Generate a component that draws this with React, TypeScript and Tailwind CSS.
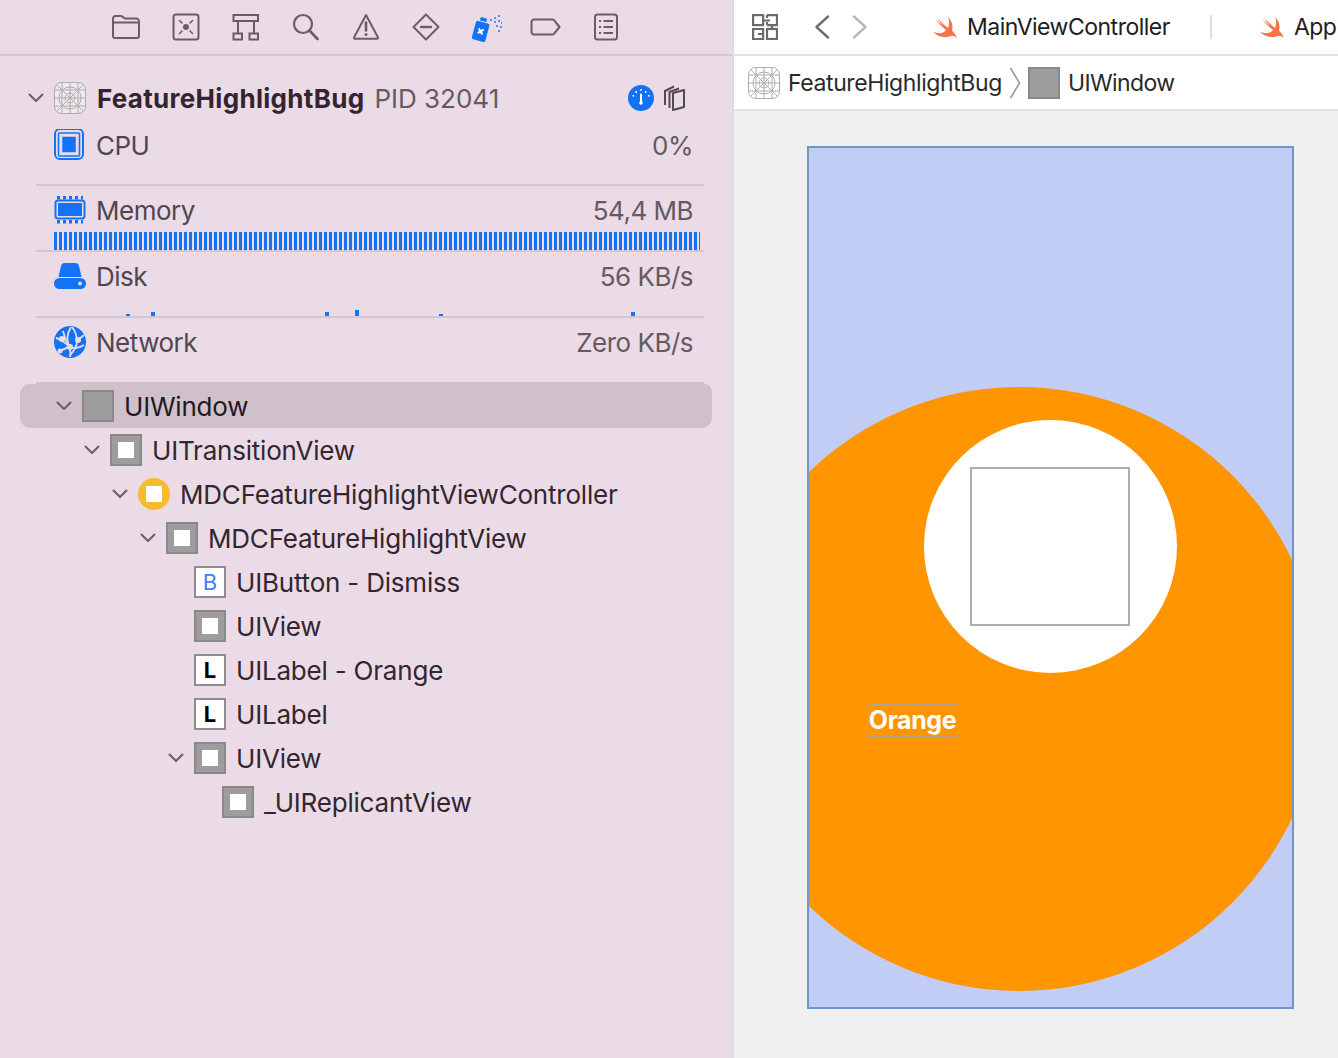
import type { ReactNode } from 'react';

const font = { fontFamily: 'Inter, "Noto Sans", sans-serif' };

const stroke = '#6b5d67';
const blue = '#1473f5';

function Ico({ children, w = 32, h = 32, className = '' }: { children: ReactNode; w?: number; h?: number; className?: string }) {
  return (
    <svg width={w} height={h} viewBox={`0 0 ${w} ${h}`} fill="none" className={`shrink-0 ${className}`}>
      {children}
    </svg>
  );
}

// navigator tabs
const navIcons: ReactNode[] = [
  <g stroke={stroke} strokeWidth="2" strokeLinejoin="round">
    <path d="M3 25V7.5A2.5 2.5 0 0 1 5.500 5H11c2 0 2.500 2.600 4.500 2.600H26.500A2.500 2.500 0 0 1 29 10.100V25a2 2 0 0 1-2 2H5a2 2 0 0 1-2-2z" />
    <path d="M3 11.500H29" />
  </g>,
  <g stroke={stroke} strokeWidth="2" strokeLinecap="round">
    <rect x="3.500" y="3.500" width="25" height="25" rx="2.500" />
    <circle cx="16" cy="16" r="3" fill={stroke} stroke="none" />
    <path d="M9.500 9.500l2.500 2.500M22.500 9.500L20 12M9.500 22.500l2.500-2.500M22.500 22.500L20 20" strokeWidth="1.600" />
  </g>,
  <g stroke={stroke} strokeWidth="2">
    <rect x="3.500" y="4" width="24.500" height="6" />
    <rect x="3.500" y="22.500" width="8.500" height="6" />
    <rect x="19.500" y="22.500" width="8.500" height="6" />
    <path d="M8 10v12.500M24 10v12.500" />
  </g>,
  <g stroke={stroke} strokeWidth="2.200" strokeLinecap="round">
    <circle cx="13" cy="13" r="9" />
    <path d="M19.500 19.500L27.500 28" strokeWidth="2.600" />
  </g>,
  <g stroke={stroke} strokeWidth="2" strokeLinejoin="round">
    <path d="M16 4L28 26.500a.8.800 0 0 1-.7 1.200H4.700a.8.800 0 0 1-.7-1.200z" />
    <path d="M16 11.500v8" strokeWidth="2.600" strokeLinecap="round" />
    <circle cx="16" cy="23.500" r="1.500" fill={stroke} stroke="none" />
  </g>,
  <g stroke={stroke} strokeWidth="2" strokeLinejoin="round">
    <path d="M16 3.500L28.500 16 16 28.500 3.500 16z" />
    <path d="M11 16h10" strokeWidth="2.400" strokeLinecap="round" />
  </g>,
  <g>
    <g transform="rotate(15 11 19)">
      <rect x="4" y="11" width="14" height="19" rx="2" fill={blue} />
      <rect x="7.500" y="6.500" width="6.500" height="3.500" fill={blue} />
      <path d="M8.500 18l5 5M13.500 18l-5 5" stroke="#fff" strokeWidth="2" />
    </g>
    <g fill="#4b93f7">
      <rect x="20" y="8" width="2" height="2" />
      <rect x="24" y="6" width="2" height="2" />
      <rect x="28" y="4" width="2" height="2" />
      <rect x="24" y="10" width="2" height="2" />
      <rect x="28" y="9" width="2" height="2" />
      <rect x="31" y="11" width="1.500" height="2" />
      <rect x="26" y="14" width="2" height="2" />
      <rect x="30" y="15" width="2" height="2" />
      <rect x="28" y="19" width="2" height="2" />
    </g>
  </g>,
  <path d="M4 8.500h18.500a2 2 0 0 1 1.500.7l5.500 6.800-5.500 6.800a2 2 0 0 1-1.500.7H4a2.500 2.500 0 0 1-2.500-2.500V11A2.500 2.500 0 0 1 4 8.500z" stroke={stroke} strokeWidth="2" strokeLinejoin="round" />,
  <g stroke={stroke} strokeWidth="2">
    <rect x="5" y="3.500" width="22" height="25" rx="2.500" />
    <path d="M13.500 10H23M13.500 16H23M13.500 22H23" />
    <path d="M9 10h2M9 16h2M9 22h2" />
  </g>,
];

function AppIcon() {
  return (
    <Ico>
      <g stroke="#adadad" strokeWidth="1" fill="none">
        <rect x="0.500" y="0.500" width="31" height="31" rx="7" fill="#fff" fillOpacity="0.35" />
        <path d="M8 .5v31M16 .5v31M24 .5v31M.5 8h31M.5 16h31M.5 24h31M3 3l26 26M29 3L3 29" />
        <circle cx="16" cy="16" r="5" />
        <circle cx="16" cy="16" r="11" />
      </g>
    </Ico>
  );
}

function Chevron() {
  return (
    <svg width="16" height="10" viewBox="0 0 16 10" fill="none" className="shrink-0">
      <path d="M1.500 1.500L8 8l6.500-6.500" stroke="#6a5e67" strokeWidth="2" strokeLinecap="round" strokeLinejoin="round" />
    </svg>
  );
}

function CpuIcon() {
  return (
    <Ico>
      <rect x="1" y="1" width="28" height="30" rx="5" stroke={blue} strokeWidth="2" transform="translate(0 -1)" />
      <rect x="4.500" y="4" width="21" height="23" rx="1" stroke={blue} strokeWidth="1.600" />
      <rect x="8.500" y="8" width="13" height="15" fill={blue} stroke={blue} strokeWidth="1" strokeDasharray="1 1" />
    </Ico>
  );
}

function MemoryIcon() {
  return (
    <Ico>
      <g fill={blue}>
        <rect x="3" y="2" width="3" height="3.500" /><rect x="9" y="2" width="3" height="3.500" />
        <rect x="15" y="2" width="3" height="3.500" /><rect x="21" y="2" width="3" height="3.500" />
        <rect x="27" y="2" width="2" height="3.500" />
        <rect x="3" y="26" width="3" height="3.500" /><rect x="9" y="26" width="3" height="3.500" />
        <rect x="15" y="26" width="3" height="3.500" /><rect x="21" y="26" width="3" height="3.500" />
        <rect x="27" y="26" width="2" height="3.500" />
      </g>
      <rect x="1.500" y="6.500" width="29" height="18" rx="2.500" stroke={blue} strokeWidth="2" />
      <rect x="4" y="9" width="24" height="13" fill={blue} />
    </Ico>
  );
}

function DiskIcon() {
  return (
    <Ico>
      <path d="M4.500 17L7 6A4 4 0 0 1 11 3H21a4 4 0 0 1 4 3L27.500 17z" fill={blue} />
      <rect x="0" y="18" width="32" height="11" rx="5.500" fill={blue} />
      <circle cx="26" cy="23.500" r="2" fill="#eadbe6" />
    </Ico>
  );
}

function NetworkIcon() {
  return (
    <Ico>
      <circle cx="16" cy="16" r="16" fill={blue} />
      <g stroke="#eadbe6" strokeWidth="1.800" fill="none">
        <path d="M2 12c5 1 8 4 13 8 3 3 9 3 15-1" />
        <path d="M17 1c-3 5-5 12-2 19 1 3 2 7 1 11" />
        <path d="M18 1c4 5 5 11 5 14 0 5-3 10-7 14" />
        <path d="M9 5c1 5 3 10 6 15M4 25c5-1 9-3 11-5M24 14l6-5" />
      </g>
      <g fill="#eadbe6">
        <circle cx="8" cy="13" r="3" />
        <circle cx="16" cy="21" r="3" />
        <circle cx="24" cy="14" r="3" />
        <circle cx="6" cy="25" r="2.500" />
      </g>
    </Ico>
  );
}

function ViewBox({ kind }: { kind: 'window' | 'view' | 'vc' | 'button' | 'label' }) {
  if (kind === 'window') {
    return <div className="w-8 h-8 shrink-0 bg-[#9d9d9d] border-2 border-[#888888]" />;
  }
  if (kind === 'vc') {
    return (
      <div className="w-8 h-8 shrink-0 rounded-full bg-[#f7bc2e] flex items-center justify-center">
        <div className="w-4 h-4 bg-white" />
      </div>
    );
  }
  if (kind === 'view') {
    return (
      <div className="w-8 h-8 shrink-0 bg-[#9d9d9d] border-2 border-[#888888] flex items-center justify-center">
        <div className="w-4 h-4 bg-white" />
      </div>
    );
  }
  return (
    <div className="w-8 h-8 shrink-0 bg-white border-2 border-[#8f8d8f] flex items-center justify-center">
      {kind === 'button' ? (
        <span className="text-[22px] leading-none text-[#3f82f0]">B</span>
      ) : (
        <span className="text-[22px] leading-none font-bold text-black">L</span>
      )}
    </div>
  );
}

const tree: { label: string; depth: number; kind: 'window' | 'view' | 'vc' | 'button' | 'label'; open?: boolean }[] = [
  { label: 'UIWindow', depth: 0, kind: 'window', open: true },
  { label: 'UITransitionView', depth: 1, kind: 'view', open: true },
  { label: 'MDCFeatureHighlightViewController', depth: 2, kind: 'vc', open: true },
  { label: 'MDCFeatureHighlightView', depth: 3, kind: 'view', open: true },
  { label: 'UIButton - Dismiss', depth: 4, kind: 'button' },
  { label: 'UIView', depth: 4, kind: 'view' },
  { label: 'UILabel - Orange', depth: 4, kind: 'label' },
  { label: 'UILabel', depth: 4, kind: 'label' },
  { label: 'UIView', depth: 4, kind: 'view', open: true },
  { label: '_UIReplicantView', depth: 5, kind: 'view' },
];

function Metric({ icon, label, value }: { icon: ReactNode; label: string; value: string }) {
  return (
    <div className="h-[44px] flex items-center pl-[54px] pr-[39px]">
      {icon}
      <span className="ml-[10px] pt-px text-[26px] tracking-[-0.5px] text-[#504650]">{label}</span>
      <span className="ml-auto pt-px text-[26px] tracking-[-0.5px] text-[#655a63]">{value}</span>
    </div>
  );
}

function Swift() {
  return (
    <svg width="24" height="21" viewBox="0 0 24 21" className="shrink-0">
      <path
        d="M15 0C20 5 20 10 19 13.500C21 15.500 23.500 19 24 21C22 19.500 20 18.500 18 19C13 21 6 21 0 14.500C5 17 10 17 13 13C9 10 5 6 2.500 2.500C6 6 9 8 11 9.500C8 7 6 4 4.500 1.500C8 5 12 8.500 15 11C16.500 7 16.500 3 15 0Z"
        fill="#f8734a"
      />
    </svg>
  );
}

export default function App() {
  const diskSpikes = [
    { x: 72, h: 2 },
    { x: 97, h: 4 },
    { x: 271, h: 4 },
    { x: 301, h: 6 },
    { x: 385, h: 2 },
    { x: 577, h: 4 },
  ];

  return (
    <div className="w-[1338px] h-[1058px] flex overflow-hidden bg-white" style={font}>
      {/* Left: debug navigator */}
      <div className="w-[734px] h-full shrink-0 bg-[#eadbe6] border-r-2 border-[#dcdcdc]">
        <div className="h-[56px] border-b-2 border-[#d3c6d0] flex items-center pl-[96px]">
          {navIcons.map((icon, i) => (
            <div key={i} className="w-[60px] flex justify-center">
              <Ico>{icon}</Ico>
            </div>
          ))}
        </div>

        <div className="mt-[20px] h-[44px] flex items-center pl-[28px]">
          <Chevron />
          <div className="ml-[10px]">
            <AppIcon />
          </div>
          <span className="ml-[11px] pt-px text-[26px] font-bold tracking-[0.3px] text-[#33252f]">FeatureHighlightBug</span>
          <span className="ml-[10px] pt-px text-[26px] text-[#655a63]">PID 32041</span>
          <div className="ml-auto mr-[46px] flex items-center gap-[6px]">
            <svg width="26" height="26" viewBox="0 0 26 26">
              <circle cx="13" cy="13" r="13" fill={blue} />
              <path d="M13 9.500V18" stroke="#fff" strokeWidth="2" strokeLinecap="round" />
              <circle cx="13" cy="18" r="1.800" fill="#fff" />
              <g fill="#fff">
                <rect x="12.300" y="4" width="1.400" height="2" />
                <rect x="7.500" y="6" width="1.400" height="2" />
                <rect x="17" y="6" width="1.400" height="2" />
                <rect x="4.500" y="10" width="1.600" height="1.600" />
                <rect x="20" y="10" width="1.600" height="1.600" />
              </g>
            </svg>
            <svg width="26" height="26" viewBox="0 0 26 26" fill="none" stroke="#544a52" strokeWidth="2" strokeLinejoin="round">
              <path d="M13 8l11-3v17l-11 3z" />
              <path d="M9.500 23V7L19 3.500" />
              <path d="M5 20V6l9-4.500" />
            </svg>
          </div>
        </div>

        <div className="mt-[3px]">
          <Metric icon={<CpuIcon />} label="CPU" value="0%" />
        </div>
        <div className="mt-[17px] ml-[36px] mr-[28px] h-[2px] bg-[#d3c6d0]" />

        <div className="mt-[2px]">
          <Metric icon={<MemoryIcon />} label="Memory" value="54,4 MB" />
        </div>
        <div className="ml-[54px] w-[646px] h-[18px] flex gap-[2px] overflow-hidden">
          {Array.from({ length: 130 }).map((_, i) => (
            <span key={i} className="w-[3px] h-full shrink-0 bg-[#1473f5]" />
          ))}
        </div>
        <div className="ml-[36px] mr-[28px] h-[2px] bg-[#d3c6d0]" />

        <div className="mt-[2px]">
          <Metric icon={<DiskIcon />} label="Disk" value="56 KB/s" />
        </div>
        <svg width="646" height="18" className="ml-[54px] block">
          {diskSpikes.map((s) => (
            <rect key={s.x} x={s.x} y={18 - s.h} width="4" height={s.h} fill={blue} />
          ))}
        </svg>
        <div className="ml-[36px] mr-[28px] h-[2px] bg-[#d3c6d0]" />

        <div className="mt-[2px]">
          <Metric icon={<NetworkIcon />} label="Network" value="Zero KB/s" />
        </div>

        <div className="mt-[18px] ml-[36px] mr-[28px] h-[2px] bg-[#d0c1cb]" />

        <div className="mx-[20px]">
          {tree.map((row, i) => (
            <div
              key={i}
              className={`h-[44px] flex items-center ${i === 0 ? 'bg-[#cfc0ca] rounded-[10px] rounded-tr-[8px]' : ''}`}
              style={{ paddingLeft: 36 + row.depth * 28 }}
            >
              <div className="w-[26px] shrink-0 flex">{row.open && <Chevron />}</div>
              <ViewBox kind={row.kind} />
              <span className={`ml-[10px] pt-px text-[26px] tracking-[-0.2px] whitespace-nowrap ${i === 0 ? 'text-[#1f1a20]' : 'text-[#33262f]'}`}>
                {row.label}
              </span>
            </div>
          ))}
        </div>
      </div>

      {/* Right: view debugger */}
      <div className="flex-1 min-w-0 h-full flex flex-col bg-[#f0f0f0]">
        <div className="h-[56px] shrink-0 bg-white border-b-2 border-[#e3e3e3] flex items-center pl-[18px] overflow-hidden">
          <svg width="26" height="26" viewBox="0 0 26 26" fill="none" stroke="#6a6a6a" strokeWidth="2.200" className="shrink-0">
            <rect x="1.100" y="1.100" width="10" height="10" />
            <path d="M15 1.100h10v10H15M15 1.100v3M15 8v3M12 6.500h6" />
            <path d="M1.100 15h10v10H1.100z" />
            <rect x="15" y="15" width="10" height="10" />
            <path d="M20 10v5M6 20h6" />
          </svg>
          <div className="ml-[18px] w-[2px] h-[24px] bg-[#dedede]" />
          <svg width="16" height="24" viewBox="0 0 16 24" fill="none" className="ml-[18px] shrink-0">
            <path d="M14 1.500L2.500 12 14 22.500" stroke="#6f6f6f" strokeWidth="2.400" strokeLinecap="round" strokeLinejoin="round" />
          </svg>
          <svg width="16" height="24" viewBox="0 0 16 24" fill="none" className="ml-[22px] shrink-0">
            <path d="M2 1.500L13.500 12 2 22.500" stroke="#b9b9b9" strokeWidth="2.400" strokeLinecap="round" strokeLinejoin="round" />
          </svg>
          <div className="ml-[19px] w-[2px] h-[24px] bg-[#dedede]" />
          <div className="ml-[46px]">
            <Swift />
          </div>
          <span className="ml-[10px] text-[23px] tracking-[-0.5px] text-[#202020] whitespace-nowrap">MainViewController</span>
          <div className="ml-[40px] w-[2px] h-[24px] bg-[#dedede] shrink-0" />
          <div className="ml-[48px]">
            <Swift />
          </div>
          <span className="ml-[10px] text-[23px] tracking-[-0.5px] text-[#202020] whitespace-nowrap">AppDelegate</span>
        </div>

        <div className="h-[55px] shrink-0 bg-white border-b-2 border-[#e3e3e3] flex items-center pl-[14px]">
          <AppIcon />
          <span className="ml-[8px] pt-px text-[23px] tracking-[-0.4px] text-[#2a2a2a]">FeatureHighlightBug</span>
          <svg width="12" height="32" viewBox="0 0 12 32" fill="none" className="ml-[7px] shrink-0">
            <path d="M1.500 1L10.500 16 1.500 31" stroke="#9a9a9a" strokeWidth="1.600" />
          </svg>
          <div className="ml-[7px] w-8 h-8 bg-[#9d9d9d] border-2 border-[#888888] shrink-0" />
          <span className="ml-[8px] pt-px text-[23px] tracking-[-0.6px] text-[#2a2a2a]">UIWindow</span>
        </div>

        <div className="flex-1 min-h-0 pt-[35px] pl-[73px]">
          <div className="relative w-[487px] h-[863px] bg-[#c2cdf6] border-2 border-[#6f97cb] overflow-hidden">
            <div className="absolute left-[-92px] top-[239px] w-[604px] h-[604px] rounded-full bg-[#ff9500]" />
            <div className="absolute left-[115px] top-[272px] w-[253px] h-[253px] rounded-full bg-white" />
            <div className="absolute left-[161px] top-[319px] w-[160px] h-[159px] bg-white border-2 border-[#adadad]" />
            <div className="absolute left-[58px] top-[556px] w-[91px] h-[33px] border border-[#b3a48c] flex items-center justify-center">
              <span className="text-[25px] font-bold tracking-[-0.4px] text-white">Orange</span>
            </div>
          </div>
        </div>
      </div>
    </div>
  );
}
